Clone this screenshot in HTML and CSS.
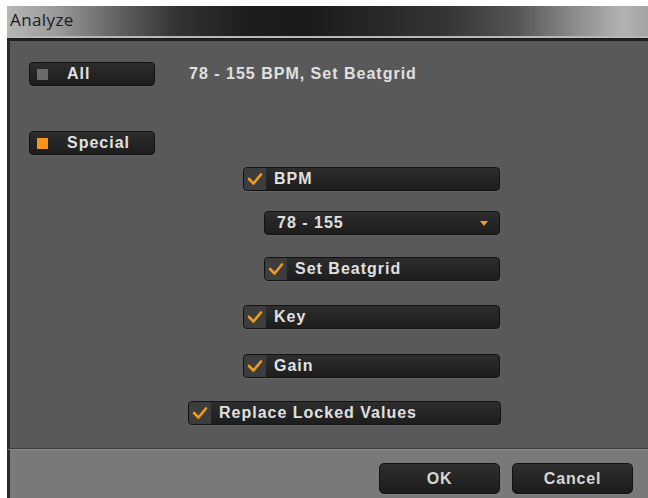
FILE: index.html
```html
<!DOCTYPE html>
<html>
<head>
<meta charset="utf-8">
<link rel="stylesheet" href="styles.css">
</head>
<body>
<div class="window">
  <div class="titlebar"><span class="title">Analyze</span></div>
  <div class="content">
    <div class="row row-all">
      <div class="btn mode"><span class="led"></span><span class="label">All</span></div>
      <div class="status">78 - 155 BPM, Set Beatgrid</div>
    </div>
    <div class="row row-special">
      <div class="btn mode"><span class="led on"></span><span class="label">Special</span></div>
    </div>
    <div class="btn check c-bpm"><span class="box"><svg viewBox="0 0 16 14" width="16" height="14"><polyline points="2,7 6.5,11.5 14,2.5" /></svg></span><span class="label">BPM</span></div>
    <div class="btn select c-range"><span class="label">78 - 155</span><span class="tri"></span></div>
    <div class="btn check c-grid"><span class="box"><svg viewBox="0 0 16 14" width="16" height="14"><polyline points="2,7 6.5,11.5 14,2.5" /></svg></span><span class="label">Set Beatgrid</span></div>
    <div class="btn check c-key"><span class="box"><svg viewBox="0 0 16 14" width="16" height="14"><polyline points="2,7 6.5,11.5 14,2.5" /></svg></span><span class="label">Key</span></div>
    <div class="btn check c-gain"><span class="box"><svg viewBox="0 0 16 14" width="16" height="14"><polyline points="2,7 6.5,11.5 14,2.5" /></svg></span><span class="label">Gain</span></div>
    <div class="btn check c-replace"><span class="box"><svg viewBox="0 0 16 14" width="16" height="14"><polyline points="2,7 6.5,11.5 14,2.5" /></svg></span><span class="label">Replace Locked Values</span></div>
  </div>
  <div class="footer">
    <div class="btn action">OK</div>
    <div class="btn action">Cancel</div>
  </div>
</div>
</body>
</html>
```

FILE: styles.css
```css
html, body {
  margin: 0;
  padding: 0;
  background: #ffffff;
  width: 648px;
  height: 498px;
  overflow: hidden;
}

.window {
  margin: 6px 0 0 7px;
  width: 641px;
  height: 492px;
  display: flex;
  flex-direction: column;
}

.titlebar {
  height: 30px;
  flex: none;
  background: linear-gradient(to right, #b6b6b6 0px, #9a9a9a 50px, #626262 110px, #333333 170px, #1d1d1d 240px, #1a1a1a 300px, #262626 360px, #353535 440px, #555555 510px, #8e8e8e 570px, #b2b2b2 615px, #a4a4a4 641px);
  border-bottom: 2px solid #b8b8b8;
  display: flex;
  align-items: center;
}

.title {
  font-family: "Open Sans", "Liberation Sans", sans-serif;
  font-size: 17px;
  color: #1c1c1c;
  padding-left: 3px;
  margin-top: -3px;
  letter-spacing: 0.4px;
}

.content {
  flex: 1;
  background: #595959;
  border-top: 3px solid #1f1f1f;
  border-left: 3px solid #2a2a2a;
  border-bottom: 1px solid #3a3a3a;
  display: flex;
  flex-direction: column;
  align-items: flex-start;
  font-family: "Liberation Sans", Arial, sans-serif;
  font-weight: bold;
  font-size: 16px;
  letter-spacing: 1px;
  color: #e0e0e0;
}

.row {
  display: flex;
  align-items: center;
}

.row-all { margin: 21px 0 0 19px; }
.row-special { margin: 45px 0 0 19px; }

.btn {
  box-sizing: border-box;
  height: 24px;
  background: linear-gradient(#2d2d2d, #1d1d1d);
  border: 1px solid #121212;
  border-radius: 4px;
  box-shadow: 0 1px 0 rgba(255, 255, 255, 0.07);
  display: flex;
  align-items: center;
}

.mode {
  width: 126px;
}

.led {
  width: 11px;
  height: 11px;
  margin-left: 7px;
  background: #6b6b6b;
  flex: none;
}

.led.on {
  background: #f7941e;
}

.mode .label {
  margin-left: 19px;
}

.status {
  margin-left: 34px;
}

.check .box {
  width: 22px;
  height: 22px;
  background: #3d3d3d;
  border-radius: 3px 0 0 3px;
  display: flex;
  align-items: center;
  justify-content: center;
  flex: none;
}

.check svg polyline {
  fill: none;
  stroke: #f29a1f;
  stroke-width: 2.6;
  stroke-linecap: round;
  stroke-linejoin: round;
}

.check .label {
  margin-left: 8px;
}

.c-bpm { margin: 12px 0 0 233px; width: 257px; }
.select { margin: 20px 0 0 254px; width: 236px; justify-content: space-between; }
.select .label { margin-left: 12px; }
.tri {
  width: 0;
  height: 0;
  border-left: 4px solid transparent;
  border-right: 4px solid transparent;
  border-top: 5px solid #f5a021;
  margin-right: 11px;
}
.c-grid { margin: 22px 0 0 254px; width: 236px; }
.c-key { margin: 24px 0 0 233px; width: 257px; }
.c-gain { margin: 25px 0 0 233px; width: 257px; }
.c-replace { margin: 23px 0 0 178px; width: 313px; }

.footer {
  height: 49px;
  flex: none;
  background: #787a7a;
  border-left: 3px solid #2a2a2a;
  border-top: 1px solid #8a8c8c;
  display: flex;
  justify-content: flex-end;
  align-items: flex-start;
  gap: 12px;
  padding: 13px 15px 0 0;
  box-sizing: border-box;
}

.action {
  width: 121px;
  height: 31px;
  justify-content: center;
  font-family: "Liberation Sans", Arial, sans-serif;
  font-weight: bold;
  font-size: 16px;
  letter-spacing: 0.8px;
  color: #d6d6d6;
  background: linear-gradient(#2f2f2f, #1c1c1c);
  border-radius: 5px;
}
```
